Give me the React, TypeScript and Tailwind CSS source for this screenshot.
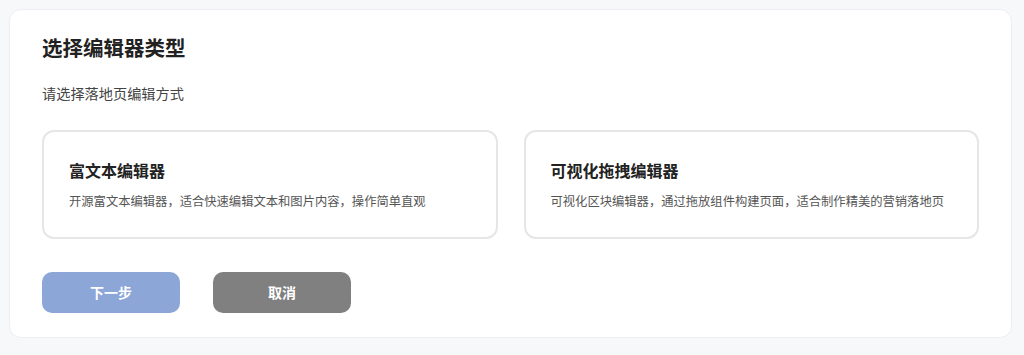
import { useState } from 'react'

const EDITORS = [
  { id: 'rich', title: '富文本编辑器', desc: '开源富文本编辑器，适合快速编辑文本和图片内容，操作简单直观' },
  { id: 'visual', title: '可视化拖拽编辑器', desc: '可视化区块编辑器，通过拖放组件构建页面，适合制作精美的营销落地页' },
]

export default function App() {
  const [selected, setSelected] = useState<string | null>(null)

  return (
    <div
      className="min-h-[355px] w-[1024px] bg-[#f7f8fa] p-[9px] pr-[12px]"
      style={{ fontFamily: '"Noto Sans CJK SC", "Noto Sans", sans-serif' }}
    >
      <div className="rounded-[12px] border border-[#eceef1] bg-white px-[32px] pt-[23px] pb-[24px]">
        <h1 className="text-[20.5px] leading-[28px] font-bold text-[#222]">选择编辑器类型</h1>
        <p className="mt-[22px] text-[14.2px] leading-[20px] text-[#444]">请选择落地页编辑方式</p>

        <div className="mt-[27px] grid grid-cols-2 gap-[26px]">
          {EDITORS.map(e => (
            <div
              key={e.id}
              onClick={() => setSelected(e.id)}
              className={`h-[109px] cursor-pointer rounded-[12px] border-2 bg-white px-[25px] pt-[26px] ${
                selected === e.id ? 'border-[#8ba6d7]' : 'border-[#e6e6e6]'
              }`}
            >
              <h2 className="text-[16px] leading-[24px] font-bold text-[#222]">{e.title}</h2>
              <p className="mt-[9px] text-[12.3px] leading-[20px] text-[#555]">{e.desc}</p>
            </div>
          ))}
        </div>

        <div className="mt-[33px] flex gap-[33px]">
          <button className="h-[41px] w-[138px] rounded-[10px] bg-[#8ba6d7] text-[14px] font-bold text-white">
            下一步
          </button>
          <button className="h-[41px] w-[138px] rounded-[10px] bg-[#808080] text-[14px] font-bold text-white">
            取消
          </button>
        </div>
      </div>
    </div>
  )
}
